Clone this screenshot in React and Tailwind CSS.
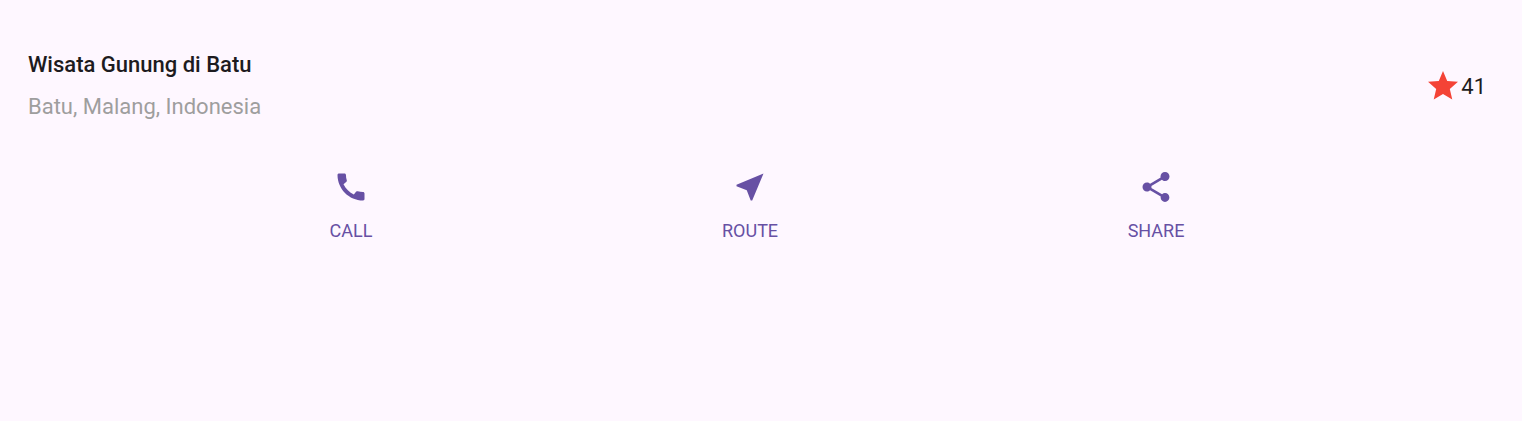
import { MdCall, MdNearMe, MdShare, MdStar } from "react-icons/md";

const actions = [
  { label: "CALL", Icon: MdCall },
  { label: "ROUTE", Icon: MdNearMe },
  { label: "SHARE", Icon: MdShare },
];

export default function App() {
  return (
    <main className="min-h-screen bg-[#fef7ff] pr-2 font-['Roboto',sans-serif] text-[#1d1b20]">
      <header className="flex items-center justify-between px-7 pt-12">
        <div>
          <h1 className="pb-2 text-[22px] leading-[34px] font-medium">Wisata Gunung di Batu</h1>
          <p className="text-[22px] leading-[34px] text-[#9e9e9e]">Batu, Malang, Indonesia</p>
        </div>
        <div className="flex items-center text-[22px]">
          <MdStar className="size-9 text-[#f44336]" aria-hidden="true" />
          <span>41</span>
        </div>
      </header>
      <nav className="mt-[45px] flex justify-evenly text-[#6750a4]">
        {actions.map(({ label, Icon }) => (
          <button key={label} type="button" className="flex flex-col items-center gap-3.5 px-5">
            <Icon className="size-9" aria-hidden="true" />
            <span className="text-lg leading-6">{label}</span>
          </button>
        ))}
      </nav>
    </main>
  );
}
